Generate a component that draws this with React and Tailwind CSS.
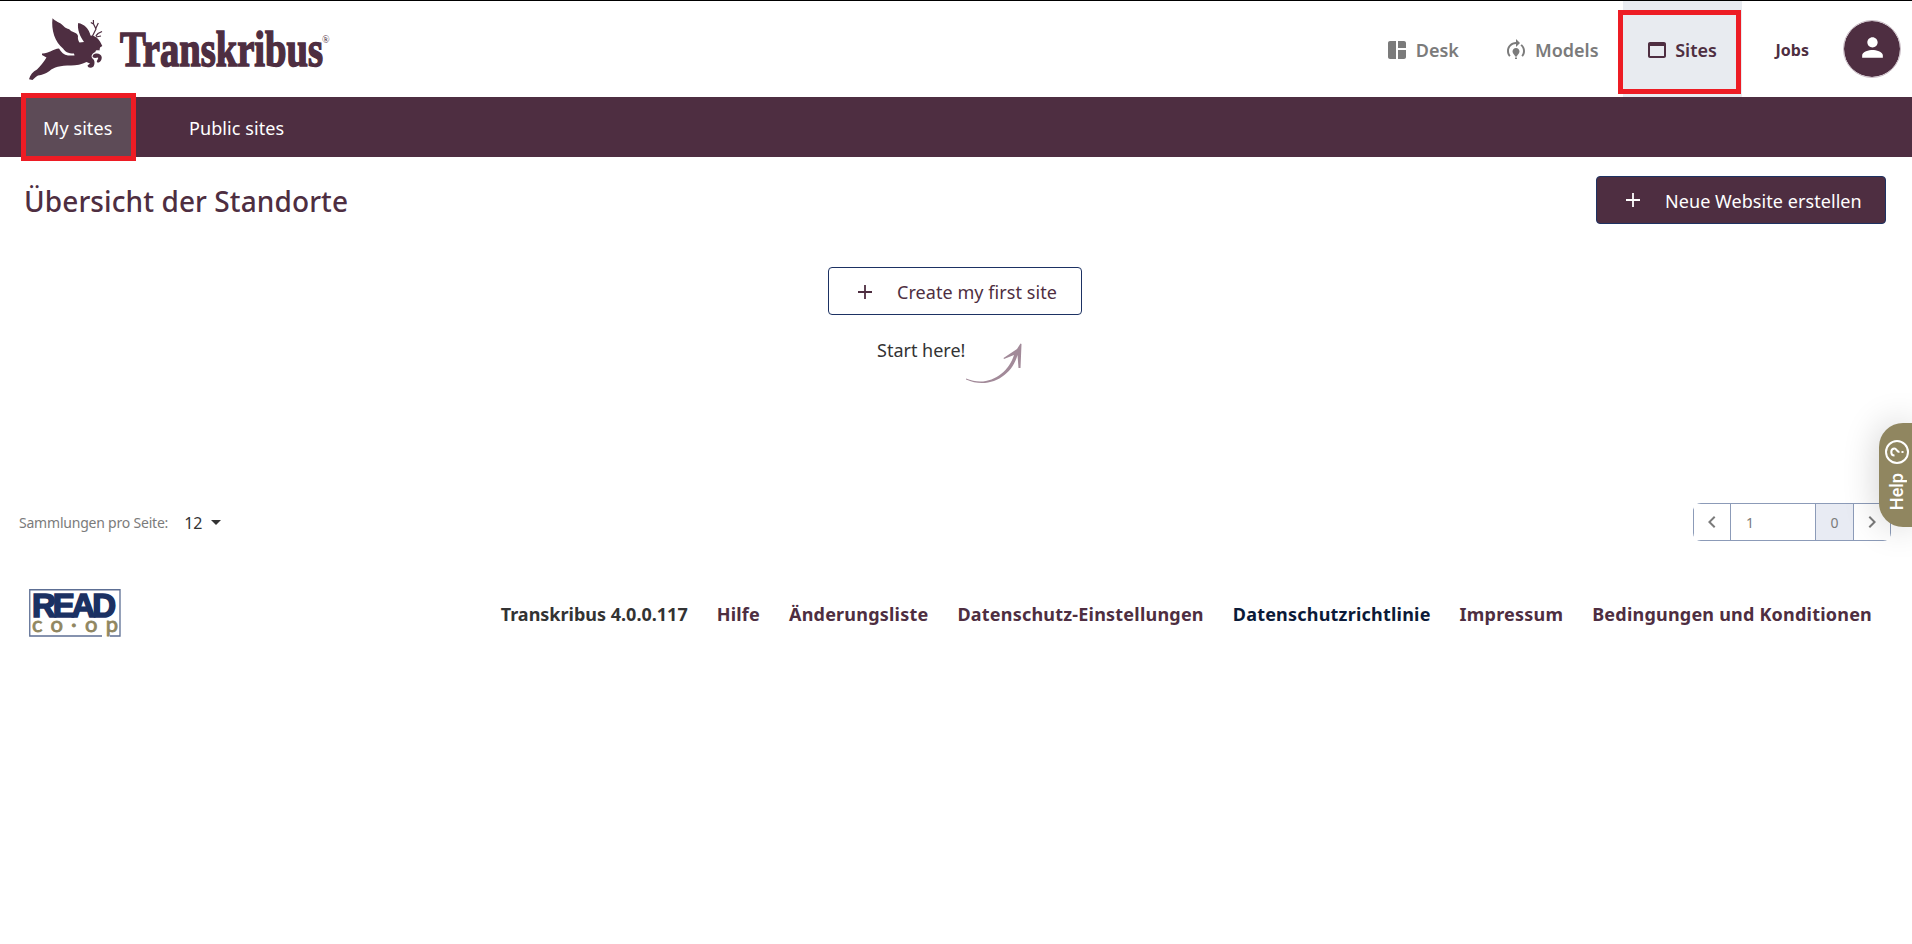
import React from "react";

const Plus = ({ className }) => (
  <svg className={className} width="24" height="24" viewBox="0 0 24 24" fill="currentColor">
    <path d="M19 12.9h-6.1V19h-1.8v-6.1H5v-1.8h6.1V5h1.8v6.1H19z" />
  </svg>
);

const Creature = () => (
  <svg className="shrink-0" width="74" height="64" viewBox="29 17 74 64" fill="#4e2e41">
    <path d="M52.500 18.200C55 21.500 60 22 63.500 26C66 29 69.500 28.500 71 31C74 32.500 77.500 33 78 36C77.500 39 78.500 41 79.500 42.500L84 42C80 36.500 77 29 78.200 23C84 24 89 28.500 90.500 35.500C95 35.500 99 39 100.800 43L102.300 46L100 47.500L99.500 50.500C97 50 95 50.200 95.500 52C92 53.500 90.500 56 92.500 58.500C95 60 95 64 93.500 66.500C91 68.500 88 68 87.500 65.500L90 63.500L86.500 62C82 64.500 76 65.500 71 65.500C60 65.500 54 67 49.500 71C46 73.500 42 75 38 75.500C35 77 34 79 32.500 80L29 79.200C30 75 33 71.500 37 69.500C40 66.500 44 62 46.500 57.500L42 55L42 53.500C48 54 53 49 59 48.500C61 52 64 55 68 55.500L74.500 55.500L74 53.500C68 53.500 65 51.500 63 48.500C55 42 51 30 52.500 18.200Z" />
    <path d="M93 55C96 52.500 101 53.500 101.700 57C102 60 100 63 97.500 62.500C95.500 61 99 59 98 57.500C96 58 94.500 58.500 92.500 57Z" />
    <path d="M92 37L96 29L93.500 24L90.800 22.500M93.500 24L93.400 20M95.500 29L98.300 23M95.800 36L98 33.500L102 31.500M96 37L101 36" stroke="#4e2e41" strokeWidth="1.200" fill="none" />
  </svg>
);

const Wordmark = () => (
  <svg className="overflow-visible" width="212" height="48" viewBox="117 25 212 48" fill="#4e2e41">
    <text x="120" y="66" textLength="203" lengthAdjust="spacingAndGlyphs" stroke="#4e2e41" strokeWidth="1.600" className="font-['Liberation_Serif',serif] text-[50px] font-bold">Transkribus</text>
    <text x="322" y="43" className="font-['Liberation_Serif',serif] text-[10px]">®</text>
  </svg>
);

const DeskIcon = () => (
  <svg width="24" height="24" viewBox="0 0 24 24" fill="currentColor">
    <path d="M11 21H5c-1.100 0-2-.9-2-2V5c0-1.100.9-2 2-2h6v18zm2 0h6c1.100 0 2-.9 2-2v-7h-8v9zm8-11V5c0-1.100-.9-2-2-2h-6v7h8z" />
  </svg>
);
const ModelIcon = () => (
  <svg width="24" height="24" viewBox="0 0 24 24" fill="currentColor">
    <path d="M15.500 13.500c0 2-2.500 3.500-2.500 5h-2c0-1.500-2.500-3-2.500-5 0-1.930 1.570-3.500 3.500-3.500s3.500 1.570 3.500 3.500zm-2.500 6h-2V21h2v-1.500zm6-6.500c0 1.680-.59 3.210-1.580 4.420l1.420 1.420C20.180 17.270 21 15.230 21 13c0-2.740-1.230-5.190-3.160-6.840l-1.420 1.420C17.990 8.860 19 10.820 19 13zm-3-8l-4-4v3c-4.970 0-9 4.030-9 9 0 2.230.82 4.270 2.160 5.840l1.420-1.420C5.590 16.210 5 14.680 5 13c0-3.860 3.140-7 7-7v3l4-4z" />
  </svg>
);
const SiteIcon = () => (
  <svg width="24" height="24" viewBox="0 0 24 24" fill="currentColor">
    <path d="M19 4H5c-1.110 0-2 .9-2 2v12c0 1.100.89 2 2 2h14c1.100 0 2-.9 2-2V6c0-1.100-.89-2-2-2zm0 14H5V8h14v10z" />
  </svg>
);

const Chevron = ({ d }) => (
  <svg width="24" height="24" viewBox="0 0 24 24" fill="currentColor"><path d={d} /></svg>
);

export default function App() {
  return (
    <div className="relative h-[944px] w-[1912px] overflow-hidden border-t border-black bg-white font-['Noto_Sans',sans-serif] text-lg leading-6 text-[#4e2e41]">
      <header className="flex h-24 items-center pl-[29px]">
        <Creature />
        <div className="pl-[14px]"><Wordmark /></div>
        <nav className="ml-auto flex h-full items-center font-semibold">
          <a className="flex items-center gap-[7px] pt-px text-[#7b7b7b]"><DeskIcon /><span className="pt-px">Desk</span></a>
          <a className="ml-[45px] flex items-center gap-[7px] pt-px text-[#7b7b7b]"><ModelIcon /><span className="pt-px">Models</span></a>
          <a className="ml-6 flex h-full w-[119px] items-center justify-center gap-[6px] bg-[#e8ebf0] pt-px pr-[2px]"><SiteIcon /><span className="pt-px">Sites</span></a>
          <a className="ml-[34px] pt-[2px] text-base font-bold">Jobs</a>
          <span className="mr-3 ml-[35px] flex size-14 items-center justify-center rounded-full bg-[#4e2e41] text-white outline outline-[#c9bcc5]">
            <svg className="-mt-[3px]" width="31" height="31" viewBox="0 0 24 24" fill="currentColor"><path d="M12 12c2.210 0 4-1.790 4-4s-1.790-4-4-4-4 1.790-4 4 1.790 4 4 4zm0 2c-2.670 0-8 1.340-8 4v2h16v-2c0-2.660-5.330-4-8-4z" /></svg>
          </span>
        </nav>
      </header>
      <div className="flex h-[60px] items-center bg-[#4e2e41] pl-[26px] tracking-[0.08px] text-white">
        <a className="flex h-full w-[105px] items-center bg-[#5d4b57] pt-[2px] pl-[17px]">My sites</a>
        <a className="ml-[58px] pt-[2px]">Public sites</a>
      </div>
      <main>
        <div className="flex h-[86px] items-center justify-between pr-[26px] pl-6">
          <h1 className="pt-[2px] text-[28px] font-medium tracking-[0.1px]">Übersicht der Standorte</h1>
          <button className="flex h-12 w-[290px] items-center rounded border border-[#1d3263] bg-[#4e2e41] pl-6 text-white">
            <Plus /><span className="ml-5 pt-[2px] tracking-[0.06px]">Neue Website erstellen</span>
          </button>
        </div>
        <div className="ml-[828px] pt-6">
          <button className="flex h-12 w-[254px] items-center rounded border border-[#1d3263] pl-6">
            <Plus className="mt-px" /><span className="ml-5 pt-[2px] tracking-[0.06px]">Create my first site</span>
          </button>
          <div className="flex pt-[23px] pl-[49px] text-[#333]">
            <span>Start here!</span>
            <svg className="mt-[2px] -ml-px" width="60" height="46" viewBox="964 340 60 46" fill="#a28a99">
              <path d="M966 378.500C988 388 1008 374 1014 355L1004 359L1003.500 358L1017 349L1020.500 343.500L1021.500 344L1020.500 368L1018.500 368L1017.500 355C1012 376 989 390 966 379.500Z" />
            </svg>
          </div>
        </div>
      </main>
      <div className="mt-[117px] flex h-[38px] items-center pl-[19px]">
        <span className="pt-px text-sm tracking-[-0.21px] text-[#7b7b7b]">Sammlungen pro Seite:</span>
        <span className="ml-4 pt-px text-base text-[#333]">12</span>
        <svg className="ml-[9px]" width="10" height="5" viewBox="0 0 10 5" fill="#333"><path d="M0 0h10L5 5z" /></svg>
        <div className="mr-[21px] ml-auto flex h-[38px] w-[198px] overflow-hidden rounded-lg text-sm text-[#7b7b7b]">
          <span className="flex w-[37px] items-center justify-center border-y border-l border-[#8c9bb8]"><Chevron d="M15.410 7.410L14 6l-6 6 6 6 1.410-1.410L10.830 12z" /></span>
          <span className="flex w-[85px] items-center border-y border-l border-[#8c9bb8] pt-px pl-[15px]">1</span>
          <span className="flex w-[39px] items-center justify-center border border-[#8c9bb8] bg-[#e8ebf3] pt-px">0</span>
          <span className="flex flex-1 items-center justify-center border-y border-r border-[#8c9bb8]"><Chevron d="M10 6L8.590 7.410 13.170 12l-4.580 4.590L10 18l6-6z" /></span>
        </div>
      </div>
      <footer className="mt-[48px] flex h-12 items-center pr-10 pl-[29px] font-bold">
        <svg className="overflow-visible" width="92" height="48" viewBox="0 0 92 48">
          <path d="M73 47H.75V.75H91V47H81" fill="none" stroke="#5d6f94" strokeWidth="1.300" />
          <text x="3" y="28" textLength="84" fill="#1b3163" stroke="#1b3163" strokeWidth="1.600" className="font-['Liberation_Sans',sans-serif] text-[33px] font-bold">READ</text>
          <text x="3" y="43" textLength="86" fill="#908660" stroke="#908660" strokeWidth="0.800" className="font-['Lato',sans-serif] text-[22px] font-normal">co·op</text>
        </svg>
        <div className="ml-auto flex gap-[29px] pt-px tracking-[0.21px]">
          <span className="tracking-normal text-[#333]">Transkribus 4.0.0.117</span>
          <a>Hilfe</a><a>Änderungsliste</a><a>Datenschutz-Einstellungen</a>
          <a className="text-[#0b1a38]">Datenschutzrichtlinie</a><a>Impressum</a><a>Bedingungen und Konditionen</a>
        </div>
      </footer>
      <div className="absolute top-[9px] left-[1618px] h-[84px] w-[123px] border-[5px] border-[#ed1c24]" />
      <div className="absolute top-[92px] left-[21px] h-[68px] w-[115px] border-[5px] border-[#ed1c24]" />
      <div className="absolute top-[422px] right-0 flex h-[104px] w-[33px] flex-col items-center rounded-l-[24px] bg-[#908660] pt-[17px] pl-[3px] text-white shadow-[0_0_36px_rgba(0,0,0,0.2)]">
        <svg className="-rotate-90" width="24" height="24" viewBox="0 0 24 24" fill="none" stroke="currentColor" strokeWidth="2"><circle cx="12" cy="12" r="11" /><path d="M8.500 9.500c0-4.300 7-4.300 7 0 0 2.200-3.500 2.200-3.500 5M12 16.500v2" /></svg>
        <span className="mt-[9px] rotate-180 font-['Roboto',sans-serif] text-lg leading-6 font-medium [writing-mode:vertical-rl]">Help</span>
      </div>
    </div>
  );
}
